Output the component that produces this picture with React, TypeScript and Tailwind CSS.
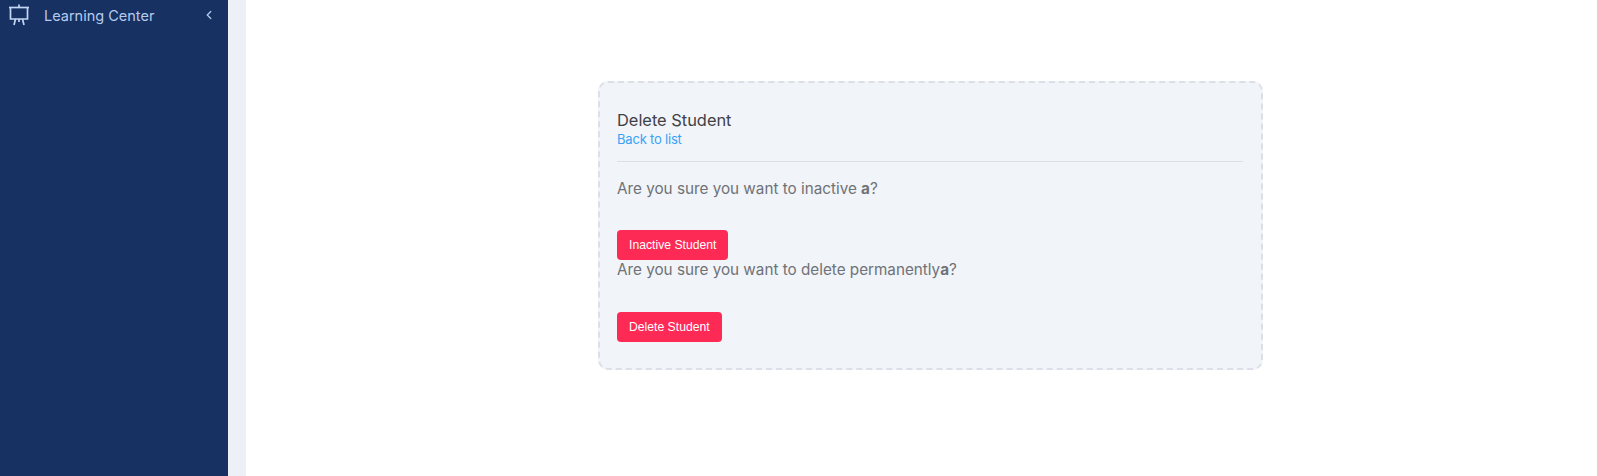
import { ChevronLeft } from "lucide-react";

function BoardIcon() {
  return (
    <svg width="22" height="24" viewBox="0 0 22 24" fill="none" stroke="#c3d6f2" strokeWidth="1.7">
      <path d="M1 4.500h20" />
      <path d="M2.500 4.500v11.500h17V4.500" />
      <path d="M11 4.500V1.500" />
      <path d="M7.500 16l-1.500 6M14.500 16l1.500 6M11 16v3" />
    </svg>
  );
}

export default function App() {
  return (
    <div className="flex h-[476px] w-full overflow-hidden bg-white font-['Inter',sans-serif]">
      {/* Sidebar */}
      <aside className="w-[228px] shrink-0 bg-[#163162]">
        <div className="flex h-[30px] items-center pl-[8px] pr-[12px]">
          <BoardIcon />
          <span className="ml-[14px] mt-[2px] flex-1 text-[14.500px] text-[#b5cbee]">Learning Center</span>
          <ChevronLeft size={14} strokeWidth={2.2} color="#b5cbee" />
        </div>
      </aside>
      <div className="w-[18px] shrink-0 bg-[#eef0f7]" />

      {/* Main Content */}
      <main className="min-w-0 flex-1 pl-[352px] pt-[81px]">
        <div className="h-[289px] w-[665px] rounded-[10px] border-2 border-dashed border-[#dcdfe6] bg-[#f1f4f9] pl-[17px] pr-[18px] pt-[26px]">
          <h1 className="text-[16.400px] leading-[22px] text-[#3f4146]">Delete Student</h1>
          <a className="block text-[13px] leading-[17px] tracking-[-0.2px] text-[#36a3f7]">Back to list</a>
          <hr className="mt-[13px] border-[#dcdfe5]" />
          <p className="mt-[17px] text-[15.250px] leading-[20px] text-[#6f7276]">
            Are you sure you want to inactive <b>a</b>?
          </p>
          <button className="mt-[31px] block h-[30px] rounded-[4px] bg-[#fd2a55] px-[12px] font-['Liberation_Sans',sans-serif] text-[12.200px] text-white">
            Inactive Student
          </button>
          <p className="text-[15.250px] leading-[19px] text-[#6f7276]">
            Are you sure you want to delete permanently<b>a</b>?
          </p>
          <button className="mt-[33px] block h-[30px] rounded-[4px] bg-[#fd2a55] px-[12px] font-['Liberation_Sans',sans-serif] text-[12.200px] text-white">
            Delete Student
          </button>
        </div>
      </main>
    </div>
  );
}
